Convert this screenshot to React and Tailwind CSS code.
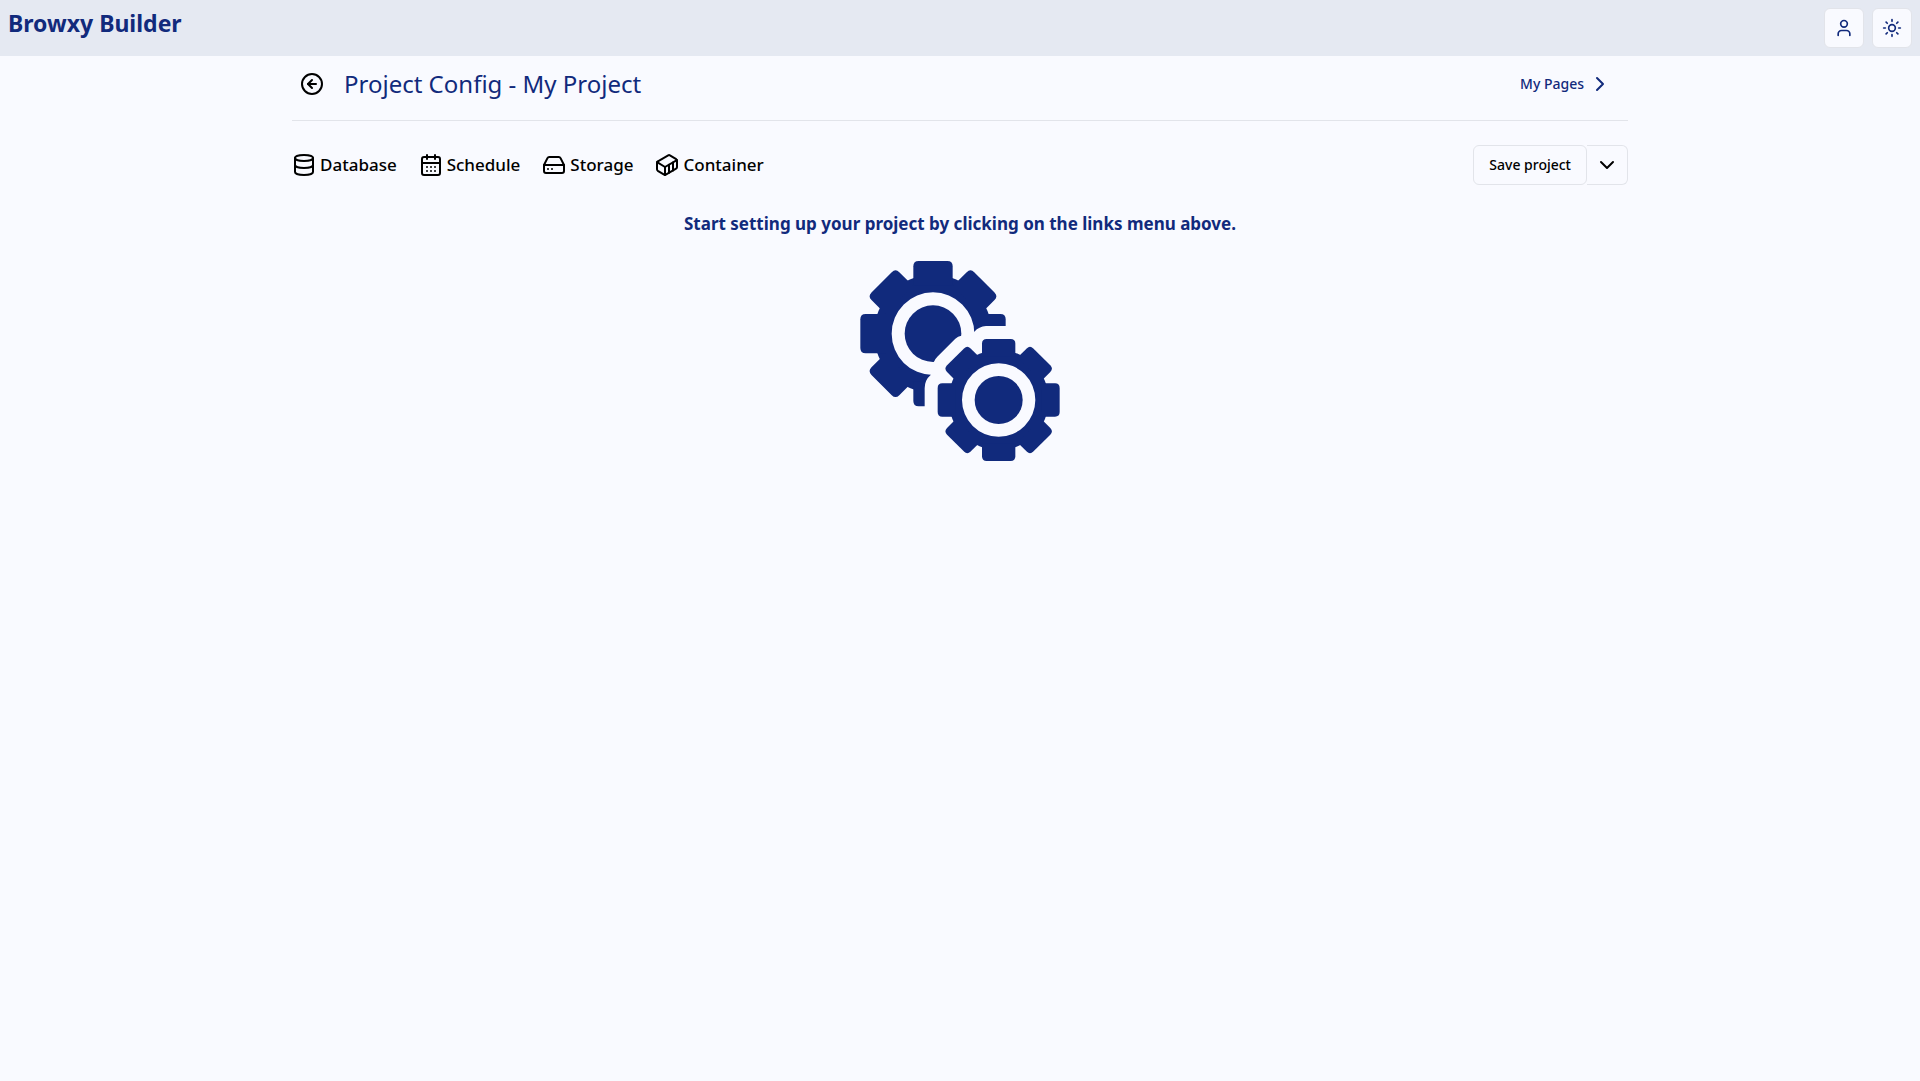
import {
  CalendarDays,
  ChevronDown,
  ChevronRight,
  CircleArrowLeft,
  Container,
  Database,
  HardDrive,
  Sun,
  User,
} from "lucide-react";

const links = [
  { label: "Database", Icon: Database },
  { label: "Schedule", Icon: CalendarDays },
  { label: "Storage", Icon: HardDrive },
  { label: "Container", Icon: Container },
];

function Gear({ cx, cy, body, half, reach, corner, ringOuter, ringInner, mask }) {
  return (
    <g mask={mask}>
      <path
        fillRule="evenodd"
        d={`M${cx - body} ${cy}a${body} ${body} 0 1 0 ${body * 2} 0a${body} ${body} 0 1 0 ${-body * 2} 0Z
            M${cx - ringOuter} ${cy}a${ringOuter} ${ringOuter} 0 1 0 ${ringOuter * 2} 0a${ringOuter} ${ringOuter} 0 1 0 ${-ringOuter * 2} 0Z`}
      />
      {[0, 45, 90, 135, 180, 225, 270, 315].map((angle) => (
        <path
          key={angle}
          transform={`rotate(${angle} ${cx} ${cy})`}
          d={`M${cx - half} ${cy - ringOuter - 20}V${cy - reach + corner}q0 ${-corner} ${corner} ${-corner}H${cx + half - corner}q${corner} 0 ${corner} ${corner}V${cy - ringOuter - 20}Z`}
        />
      ))}
      <circle cx={cx} cy={cy} r={ringInner} />
    </g>
  );
}

function Gears() {
  return (
    <svg viewBox="60 33 600 600" className="size-50" fill="currentColor" aria-hidden="true">
      <mask id="gear-overlap" maskUnits="userSpaceOnUse" x="0" y="0" width="700" height="700">
        <rect width="700" height="700" fill="white" />
        <path
          fill="black"
          d="M540 228H438A51 51 0 0 0 403 245L382 254L364 257Q354 259 346 266L292 320Q285 327 282 335L272 375Q254 390 254 415V540H540Z"
        />
      </mask>
      <Gear cx={279} cy={251} body={177} half={59} reach={218} corner={16} ringOuter={124} ringInner={85} mask="url(#gear-overlap)" />
      <Gear cx={476} cy={450} body={150} half={50} reach={183} corner={14} ringOuter={110} ringInner={72} />
    </svg>
  );
}

function HeaderButton({ label, Icon }) {
  return (
    <button
      type="button"
      aria-label={label}
      className="flex size-10 items-center justify-center rounded-md border border-[#e2e4ea] bg-[#f9faff]"
    >
      <Icon size={20} />
    </button>
  );
}

export default function App() {
  return (
    <div className="min-h-screen bg-[#f9faff] font-['Noto_Sans',sans-serif] text-[#112a7c]">
      <header className="flex items-start justify-between bg-[#e5e9f2] p-2">
        <h1 className="text-[23px] leading-[30px] font-bold">Browxy Builder</h1>
        <div className="flex gap-2">
          <HeaderButton label="Account" Icon={User} />
          <HeaderButton label="Toggle theme" Icon={Sun} />
        </div>
      </header>

      <main className="mx-auto max-w-[1400px] px-8">
        <div className="flex items-center justify-between border-b border-[#e2e4ea] pt-2 pb-4">
          <div className="flex items-center gap-3">
            <button type="button" aria-label="Go back" className="flex size-10 items-center justify-center text-black">
              <CircleArrowLeft size={24} />
            </button>
            <h2 className="text-2xl leading-[30px]">Project Config - My Project</h2>
          </div>
          <a href="#pages" className="flex h-10 items-center gap-1 px-4 text-sm font-medium">
            My Pages
            <ChevronRight size={24} />
          </a>
        </div>

        <div className="mt-6 flex items-center justify-between text-black">
          <nav className="flex gap-[22px]">
            {links.map(({ label, Icon }) => (
              <a key={label} href="#" className="flex items-center gap-1 text-[17px] leading-6 font-medium">
                <Icon size={24} />
                {label}
              </a>
            ))}
          </nav>
          <div className="flex">
            <button type="button" className="h-10 rounded-md border border-[#e2e4ea] px-[15px] text-sm font-medium">
              Save project
            </button>
            <button
              type="button"
              aria-label="More save options"
              className="flex h-10 items-center rounded-r-md border border-l-0 border-[#e2e4ea] px-2"
            >
              <ChevronDown size={24} />
            </button>
          </div>
        </div>

        <section className="mt-6 flex flex-col items-center gap-[22px]">
          <p className="text-[17px] leading-[30px] font-bold">
            Start setting up your project by clicking on the links menu above.
          </p>
          <Gears />
        </section>
      </main>
    </div>
  );
}
